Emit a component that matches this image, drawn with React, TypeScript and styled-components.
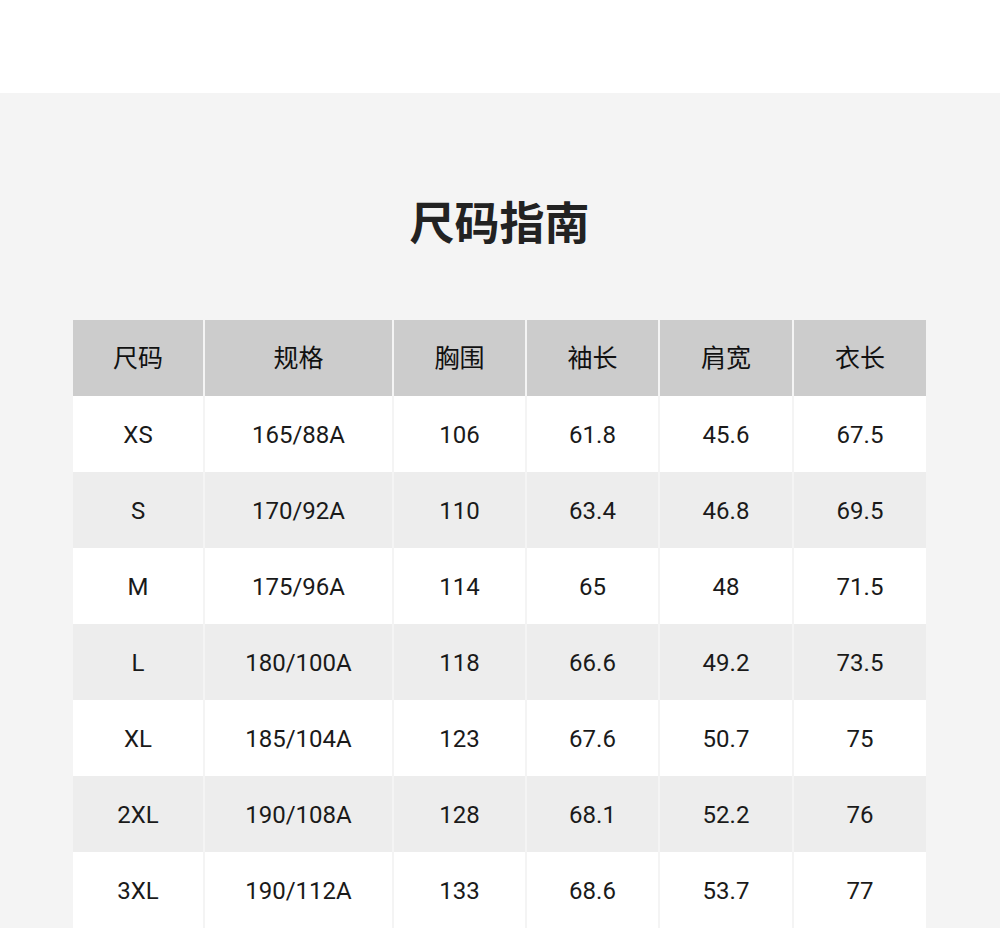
import React from 'react';
import styled, { createGlobalStyle } from 'styled-components';

const GlobalStyle = createGlobalStyle`
  html, body {
    margin: 0;
    padding: 0;
    background: #f4f4f4;
  }
  body {
    font-family: Roboto, "Noto Sans CJK SC", sans-serif;
    color: #1a1a1a;
  }
`;

const headers = ['尺码', '规格', '胸围', '袖长', '肩宽', '衣长'];

const rows = [
  ['XS', '165/88A', '106', '61.8', '45.6', '67.5'],
  ['S', '170/92A', '110', '63.4', '46.8', '69.5'],
  ['M', '175/96A', '114', '65', '48', '71.5'],
  ['L', '180/100A', '118', '66.6', '49.2', '73.5'],
  ['XL', '185/104A', '123', '67.6', '50.7', '75'],
  ['2XL', '190/108A', '128', '68.1', '52.2', '76'],
  ['3XL', '190/112A', '133', '68.6', '53.7', '77'],
];

const TopBar = styled.div`
  height: 93px;
  background: #ffffff;
`;

const Section = styled.section`
  background: #f4f4f4;
  padding: 99px 0 40px 73px;
  display: flex;
  flex-direction: column;
  align-items: flex-start;
`;

const Title = styled.h1`
  margin: 0;
  width: 853px;
  text-align: center;
  font-family: "Noto Sans CJK SC", sans-serif;
  font-size: 45px;
  line-height: 58px;
  font-weight: 700;
  color: #222222;
`;

const Table = styled.div`
  margin-top: 70px;
  display: grid;
  grid-template-columns: 130px 187px 131px 131px 132px 132px;
  column-gap: 2px;
`;

const HeadCell = styled.div`
  height: 76px;
  box-sizing: border-box;
  padding-bottom: 4px;
  background: #cccccc;
  display: flex;
  align-items: center;
  justify-content: center;
  font-family: "Noto Sans CJK SC", sans-serif;
  font-size: 25px;
  color: #111111;
`;

const Cell = styled.div<{ $alt: boolean }>`
  height: 76px;
  box-sizing: border-box;
  padding-top: 2px;
  background: ${({ $alt }) => ($alt ? '#ededed' : '#ffffff')};
  display: flex;
  align-items: center;
  justify-content: center;
  font-family: Roboto, "Noto Sans CJK SC", sans-serif;
  font-size: 24px;
  color: #1a1a1a;
`;

const App = () => {
  return (
    <div>
      <GlobalStyle />
      <TopBar />
      <Section>
        <Title>尺码指南</Title>
        <Table>
          {headers.map((h) => (
            <HeadCell key={h}>{h}</HeadCell>
          ))}
          {rows.map((row, i) =>
            row.map((v, j) => (
              <Cell key={`${i}-${j}`} $alt={i % 2 === 1}>
                {v}
              </Cell>
            ))
          )}
        </Table>
      </Section>
    </div>
  );
};

export default App;
